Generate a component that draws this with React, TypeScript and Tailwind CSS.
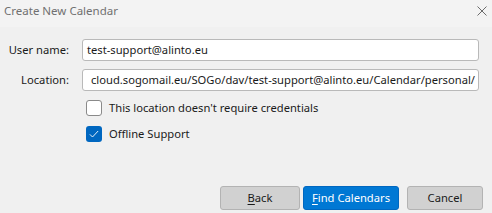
import React from 'react';

const CheckIcon = () => (
  <svg viewBox="0 0 16 16" className="h-[12px] w-[12px]" fill="none">
    <path d="M2.5 8.5 L6 12 L13.5 4" stroke="white" strokeWidth="1.2" />
  </svg>
);

const App = () => {
  return (
    <div className="w-[492px] h-[213px] bg-[#f0f0f0] flex flex-col text-[11.2px] text-[#1a1a1a] overflow-hidden font-['Noto_Sans',sans-serif]">
      {/* Title bar */}
      <div className="h-[27px] bg-[#f3f3f3] flex items-center justify-between pl-[4px] pr-[5px]">
        <span className="text-[#707070] text-[11.5px] -mt-[5px]">Create New Calendar</span>
        <svg viewBox="0 0 10 10" className="h-[10px] w-[10px] -mt-[5px]" fill="none">
          <path d="M0.5 0.5 L9.5 9.5 M9.5 0.5 L0.5 9.5" stroke="#6b6b6b" strokeWidth="1" />
        </svg>
      </div>

      {/* Form */}
      <div className="flex flex-col pt-[12px]">
        <div className="flex items-center h-[22px]">
          <label className="w-[69px] text-right">User name:</label>
          <div className="ml-[13px] w-[397px] h-[22px] bg-white border border-[#b9b9b9] rounded-[3px] flex items-center px-[4px]">
            test-support@alinto.eu
          </div>
        </div>
        <div className="flex items-center h-[22px] mt-[8px]">
          <label className="w-[69px] text-right">Location:</label>
          <div className="ml-[13px] w-[397px] h-[22px] bg-white border border-[#b9b9b9] rounded-[3px] flex items-center justify-end overflow-hidden whitespace-nowrap px-[3px]">
            <span>cloud.sogomail.eu/SOGo/dav/test-support@alinto.eu/Calendar/personal/</span>
          </div>
        </div>

        <div className="flex items-center ml-[86px] mt-[9px] h-[16px]">
          <span className="w-[16px] h-[16px] bg-white border border-[#8a8a8a] rounded-[3px]" />
          <span className="ml-[7px]">This location doesn't require credentials</span>
        </div>
        <div className="flex items-center ml-[86px] mt-[10px] h-[16px]">
          <span className="w-[16px] h-[16px] bg-[#0067c0] rounded-[3px] flex items-center justify-center">
            <CheckIcon />
          </span>
          <span className="ml-[7px]">Offline Support</span>
        </div>
      </div>

      {/* Buttons */}
      <div className="mt-auto mb-[3px] flex justify-end pr-[9px]">
        <button className="w-[80px] h-[24px] bg-[#d1d1d1] border border-[#b3b3b3] rounded-[3px]">
          <span className="underline underline-offset-2">B</span>ack
        </button>
        <button className="ml-[3px] w-[96px] h-[24px] bg-[#0078d4] border border-[#0067c0] rounded-[3px] text-white">
          <span className="underline underline-offset-2">F</span>ind Calendars
        </button>
        <button className="ml-[8px] w-[76px] h-[24px] bg-[#d1d1d1] border border-[#b3b3b3] rounded-[3px]">
          Cancel
        </button>
      </div>
    </div>
  );
};

export default App;
